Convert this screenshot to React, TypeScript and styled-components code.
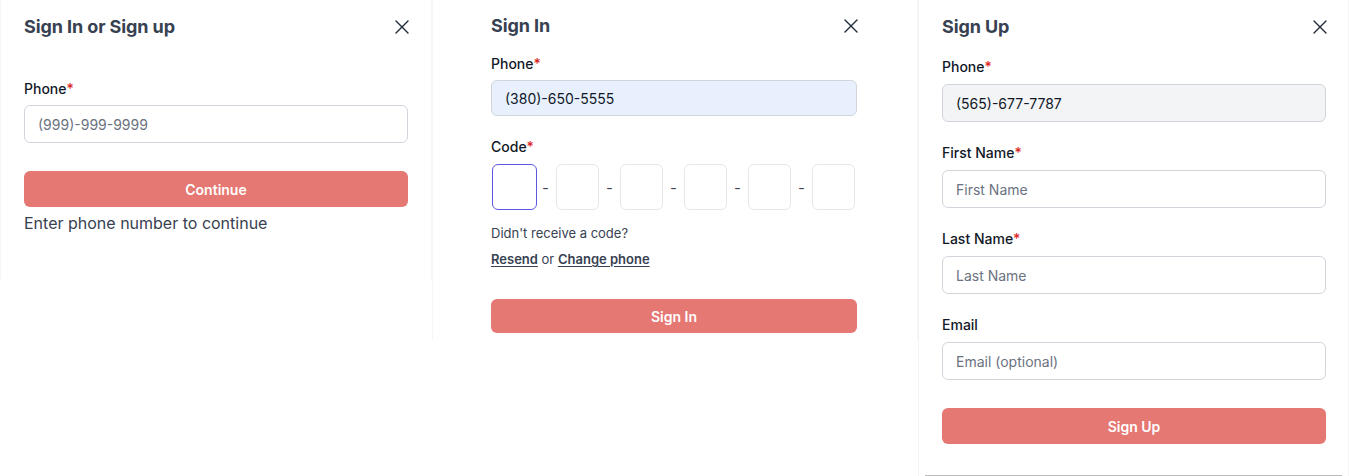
import React from "react";
import styled, { createGlobalStyle } from "styled-components";

const Global = createGlobalStyle`
  html, body { margin: 0; padding: 0; background: #ffffff; }
  body { font-family: Inter, "Noto Sans", "Liberation Sans", sans-serif; -webkit-font-smoothing: antialiased; }
  * { box-sizing: border-box; }
`;

const Page = styled.div`
  display: grid;
  grid-template-columns: 432px 486px 431px;
  align-items: start;
  width: 1349px;
  height: 476px;
  overflow: hidden;
`;

const Panel = styled.div<{ $h: number; $pl: number; $pr: number; $pt: number; $bottomLine?: boolean }>`
  height: ${(p) => p.$h}px;
  padding: ${(p) => p.$pt}px ${(p) => p.$pr}px 0 ${(p) => p.$pl}px;
  box-shadow: inset 1px 0 0 #f5f5f5, inset -1px 0 0 #f5f5f5;
  background: #fff;
  display: flex;
  flex-direction: column;
  position: relative;
  & > * { flex-shrink: 0; }
  ${(p) =>
    p.$bottomLine &&
    `&::after { content: ""; position: absolute; left: 7px; right: 7px; bottom: 0; height: 1px; background: #b9b9b9; }`}
`;

const Header = styled.div`
  display: flex;
  align-items: center;
  justify-content: space-between;
  height: 28px;
`;

const Title = styled.h2`
  margin: 0;
  font-size: 18px;
  line-height: 28px;
  font-weight: 700;
  color: #374151;
  letter-spacing: -0.1px;
`;

const CloseBtn = styled.button`
  border: 0;
  background: none;
  padding: 0;
  width: 16px;
  height: 16px;
  display: flex;
  align-items: center;
  justify-content: center;
  color: #1f2937;
  margin-right: -2px;
  cursor: pointer;
`;

const Label = styled.label<{ $mt: number }>`
  display: block;
  margin-top: ${(p) => p.$mt}px;
  font-size: 14px;
  line-height: 20px;
  font-weight: 500;
  color: #111827;
`;

const Req = styled.span`
  color: #dc2626;
`;

const Input = styled.input<{ $variant?: "autofill" | "disabled"; $h: number; $mt: number }>`
  display: block;
  width: 100%;
  margin-top: ${(p) => p.$mt}px;
  height: ${(p) => p.$h}px;
  padding: 0 13px;
  border: 1px solid #d1d5db;
  border-radius: 6px;
  font-family: inherit;
  font-size: 14px;
  color: #111827;
  background: ${(p) =>
    p.$variant === "autofill" ? "#e8f0fe" : p.$variant === "disabled" ? "#f3f4f6" : "#ffffff"};
  outline: none;
  &::placeholder { color: #6b7280; }
`;

const Button = styled.button<{ $h: number; $mt: number }>`
  display: block;
  width: 100%;
  margin-top: ${(p) => p.$mt}px;
  height: ${(p) => p.$h}px;
  border: 0;
  border-radius: 6px;
  background: #e57872;
  color: #fff;
  font-family: inherit;
  font-size: 14px;
  font-weight: 600;
  cursor: pointer;
`;

const Hint = styled.p`
  margin: 4px 0 0;
  font-size: 16px;
  line-height: 24px;
  color: #374151;
`;

const CodeRow = styled.div`
  display: flex;
  align-items: center;
  margin-top: 7px;
  margin-left: 1px;
`;

const CodeBox = styled.input<{ $focused?: boolean }>`
  width: ${(p) => (p.$focused ? 45 : 43)}px;
  height: 46px;
  border-radius: 6px;
  border: ${(p) => (p.$focused ? "1.5px solid #5b57e0" : "1px solid #e5e7eb")};
  background: #fff;
  outline: none;
  text-align: center;
  font-family: inherit;
  font-size: 16px;
  margin-right: ${(p) => (p.$focused ? -2 : 0)}px;
`;

const Dash = styled.span`
  width: 21px;
  text-align: center;
  font-size: 14px;
  color: #374151;
`;

const SmallText = styled.p<{ $mt: number }>`
  margin: ${(p) => p.$mt}px 0 0;
  font-size: 13px;
  line-height: 20px;
  color: #374151;
`;

const LinkText = styled.a`
  font-weight: 600;
  color: #374151;
  text-decoration: underline;
  text-underline-offset: 2px;
  cursor: pointer;
`;

const XIcon = () => (
  <svg width="14" height="14" viewBox="0 0 14 14" fill="none">
    <path d="M1 1L13 13M13 1L1 13" stroke="currentColor" strokeWidth="1.4" strokeLinecap="round" />
  </svg>
);

const PanelHeader = ({ title }: { title: string }) => (
  <Header>
    <Title>{title}</Title>
    <CloseBtn aria-label="Close">
      <XIcon />
    </CloseBtn>
  </Header>
);

export default function App() {
  return (
    <>
      <Global />
      <Page>
        <Panel $h={280} $pl={24} $pr={24} $pt={13}>
          <PanelHeader title="Sign In or Sign up" />
          <Label $mt={38}>
            Phone<Req>*</Req>
          </Label>
          <Input $h={38} $mt={6} placeholder="(999)-999-9999" />
          <Button $h={36} $mt={28}>Continue</Button>
          <Hint>Enter phone number to continue</Hint>
        </Panel>

        <Panel $h={340} $pl={59} $pr={61} $pt={12}>
          <PanelHeader title="Sign In" />
          <Label $mt={14}>
            Phone<Req>*</Req>
          </Label>
          <Input $h={36} $mt={6} $variant="autofill" defaultValue="(380)-650-5555" />
          <Label $mt={21}>
            Code<Req>*</Req>
          </Label>
          <CodeRow>
            {[0, 1, 2, 3, 4, 5].map((i) => (
              <React.Fragment key={i}>
                {i > 0 && <Dash>-</Dash>}
                <CodeBox $focused={i === 0} maxLength={1} />
              </React.Fragment>
            ))}
          </CodeRow>
          <SmallText $mt={13}>Didn't receive a code?</SmallText>
          <SmallText $mt={6}>
            <LinkText>Resend</LinkText> or <LinkText>Change phone</LinkText>
          </SmallText>
          <Button $h={34} $mt={30}>Sign In</Button>
        </Panel>

        <Panel $h={476} $pl={24} $pr={23} $pt={13} $bottomLine>
          <PanelHeader title="Sign Up" />
          <Label $mt={16}>
            Phone<Req>*</Req>
          </Label>
          <Input $h={38} $mt={7} $variant="disabled" defaultValue="(565)-677-7787" />
          <Label $mt={21}>
            First Name<Req>*</Req>
          </Label>
          <Input $h={38} $mt={7} placeholder="First Name" />
          <Label $mt={21}>
            Last Name<Req>*</Req>
          </Label>
          <Input $h={38} $mt={7} placeholder="Last Name" />
          <Label $mt={21}>Email</Label>
          <Input $h={38} $mt={7} placeholder="Email (optional)" />
          <Button $h={36} $mt={28}>Sign Up</Button>
        </Panel>
      </Page>
    </>
  );
}
